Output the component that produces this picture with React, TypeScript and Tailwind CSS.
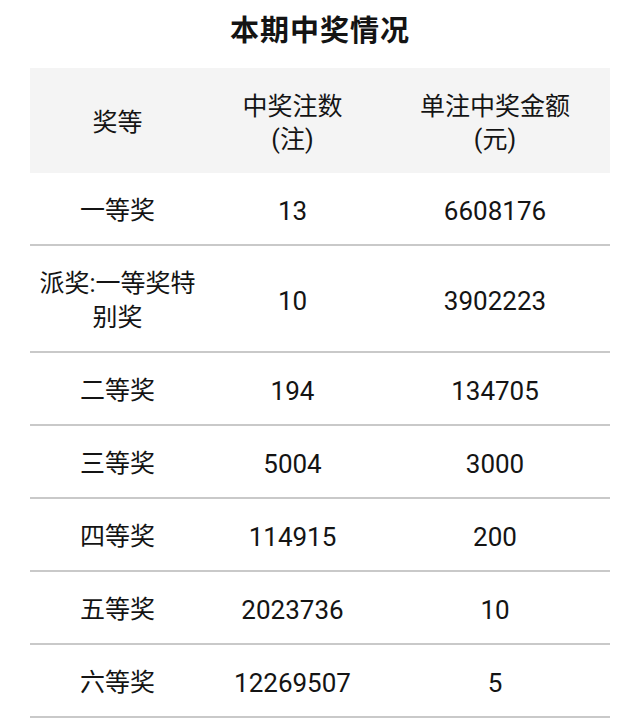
const FONT = '"Roboto", "Noto Sans CJK SC", sans-serif';

type Row = { level: string; count: string; amount: string; tall?: boolean };

const ROWS: Row[] = [
  { level: "一等奖", count: "13", amount: "6608176" },
  { level: "派奖:一等奖特别奖", count: "10", amount: "3902223", tall: true },
  { level: "二等奖", count: "194", amount: "134705" },
  { level: "三等奖", count: "5004", amount: "3000" },
  { level: "四等奖", count: "114915", amount: "200" },
  { level: "五等奖", count: "2023736", amount: "10" },
  { level: "六等奖", count: "12269507", amount: "5" },
];

export default function App() {
  return (
    <div
      className="w-[640px] h-[724px] bg-white text-[#141414] overflow-hidden"
      style={{ fontFamily: FONT }}
    >
      <h1 className="h-[68px] flex items-center justify-center pb-1 text-[29px] font-bold tracking-[1px]">
        本期中奖情况
      </h1>

      <div className="mx-[30px] w-[580px]">
        <div className="grid grid-cols-[175px_175px_230px] h-[105px] pt-[4px] bg-[#f4f4f4] text-[25px] leading-[33px] text-center">
          <div className="flex items-center justify-center">奖等</div>
          <div className="flex flex-col items-center justify-center">
            <span>中奖注数</span>
            <span>(注)</span>
          </div>
          <div className="flex flex-col items-center justify-center">
            <span>单注中奖金额</span>
            <span>(元)</span>
          </div>
        </div>

        {ROWS.map((row) => (
          <div
            key={row.level}
            className={
              "grid grid-cols-[175px_175px_230px] pt-[4px] border-b-2 border-[#c9c9c9] text-[25px] leading-[34px] text-center " +
              (row.tall ? "h-[107px]" : "h-[73px]")
            }
          >
            <div className="flex items-center justify-center px-[4px]">
              {row.level}
            </div>
            <div className="flex items-center justify-center text-[26px]">
              {row.count}
            </div>
            <div className="flex items-center justify-center text-[26px]">
              {row.amount}
            </div>
          </div>
        ))}
      </div>
    </div>
  );
}
